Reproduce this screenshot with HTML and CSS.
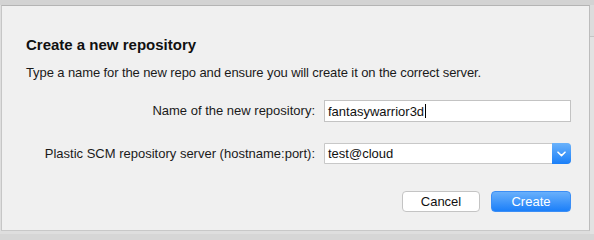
FILE: index.html
```
<!DOCTYPE html>
<html lang="en">
<head>
<meta charset="utf-8">
<title>Create a new repository</title>
<link rel="stylesheet" href="styles.css">
</head>
<body>
<div class="screen">
  <div class="sheet">
    <h1 class="title">Create a new repository</h1>
    <p class="subtitle">Type a name for the new repo and ensure you will create it on the correct server.</p>
    <div class="form">
      <label class="label" for="repo">Name of the new repository:</label>
      <div class="input"><span class="value">fantasywarrior3d</span><span class="caret"></span></div>
      <label class="label">Plastic SCM repository server (hostname:port):</label>
      <div class="select">
        <span class="value">test@cloud</span>
        <span class="arrow">
          <svg width="9" height="6" viewBox="0 0 9 6"><path d="M1 1.2 L4.5 4.6 L8 1.2" fill="none" stroke="#fff" stroke-width="1.6" stroke-linecap="round" stroke-linejoin="round"/></svg>
        </span>
      </div>
    </div>
    <div class="actions">
      <button class="btn cancel">Cancel</button>
      <button class="btn primary">Create</button>
    </div>
  </div>
  <div class="strip"><div class="strip-top"></div></div>
</div>
</body>
</html>
```
FILE: styles.css
```
html, body {
  margin: 0;
  padding: 0;
}
body {
  width: 594px;
  height: 234px;
  overflow: hidden;
  background: #d6d6d6;
  font-family: "Liberation Sans", Arial, sans-serif;
  color: #1c1c1c;
}
.screen {
  display: flex;
  height: 234px;
  box-sizing: border-box;
  padding-top: 5px;
  background: linear-gradient(#d3d3d3, #d3d3d3) top / 100% 5px no-repeat, #dedede;
}
.sheet {
  width: 589px;
  height: 226px;
  box-sizing: border-box;
  margin-left: 1px;
  background: #f0f0f0;
  border-top: 1px solid #b4b4b4;
  border-left: 1px solid #c6c6c6;
  border-right: 1px solid #bcbcbc;
  border-bottom: 1px solid #c8c8c8;
  padding: 30px 18px 0 23px;
  display: flex;
  flex-direction: column;
}
.strip {
  flex: 1;
  background: #e2e2e2;
  display: flex;
  flex-direction: column;
}
.strip-top {
  height: 31px;
  border-bottom: 1px solid #c4c4c4;
  background: #dcdcdc;
}
.title {
  margin: 0 0 0 1px;
  font-size: 15px;
  line-height: 18px;
  font-weight: bold;
  color: #111;
}
.subtitle {
  margin: 11px 0 0 1px;
  font-size: 13px;
  line-height: 16px;
  letter-spacing: -0.1px;
  color: #1a1a1a;
}
.form {
  margin-top: 19px;
  display: grid;
  grid-template-columns: 290px 247px;
  column-gap: 9px;
  row-gap: 21px;
  align-items: center;
}
.label {
  text-align: right;
  font-size: 13px;
  line-height: 16px;
  color: #1a1a1a;
}
.input, .select {
  height: 22px;
  box-sizing: border-box;
  background: #fff;
  border: 1px solid #c3c3c3;
  display: flex;
  align-items: center;
  padding-left: 3px;
  font-size: 13px;
  color: #111;
}
.select {
  height: 21px;
  border-radius: 0 4px 4px 0;
  border-color: #c8c8c8;
  padding-right: 0;
}
.select .value {
  flex: 1;
}
.caret {
  display: inline-block;
  width: 1px;
  height: 14px;
  background: #000;
  margin-left: 1px;
}
.arrow {
  width: 19px;
  height: 21px;
  margin: -1px -1px -1px 0;
  border-radius: 0 4px 4px 0;
  background: linear-gradient(#6ab2fb, #1a7ff8);
  display: flex;
  align-items: center;
  justify-content: center;
}
.actions {
  margin-top: 27px;
  display: flex;
  justify-content: flex-end;
  gap: 11px;
}
.btn {
  height: 21px;
  box-sizing: border-box;
  font-family: "Liberation Sans", Arial, sans-serif;
  font-size: 13px;
  border-radius: 4px;
  padding: 0;
  display: flex;
  align-items: center;
  justify-content: center;
}
.cancel {
  width: 78px;
  background: #fff;
  border: 1px solid #c4c4c4;
  color: #111;
}
.primary {
  width: 80px;
  background: linear-gradient(#69b0fb, #1b7ff9);
  border: 1px solid #3b8ef5;
  color: #fff;
}
```
